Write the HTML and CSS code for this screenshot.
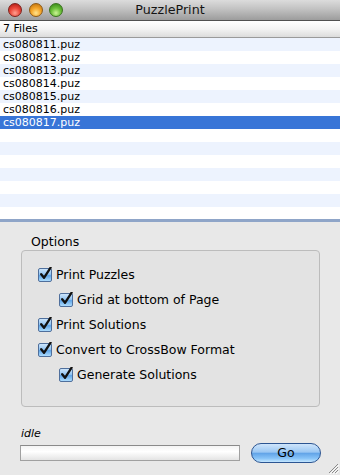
FILE: index.html
```html
<!DOCTYPE html>
<html>
<head>
<meta charset="utf-8">
<link rel="stylesheet" href="styles.css">
</head>
<body>
<div class="window">
  <div class="titlebar">
    <div class="lights">
      <span class="light red"></span>
      <span class="light yellow"></span>
      <span class="light green"></span>
    </div>
    <div class="title">PuzzlePrint</div>
  </div>
  <div class="list">
    <div class="list-header">7 Files</div>
    <div class="rows">
      <div class="row">cs080811.puz</div>
      <div class="row">cs080812.puz</div>
      <div class="row">cs080813.puz</div>
      <div class="row">cs080814.puz</div>
      <div class="row">cs080815.puz</div>
      <div class="row">cs080816.puz</div>
      <div class="row selected">cs080817.puz</div>
      <div class="row"></div>
      <div class="row"></div>
      <div class="row"></div>
      <div class="row"></div>
      <div class="row"></div>
      <div class="row"></div>
      <div class="row"></div>
    </div>
  </div>
  <div class="panel">
    <div class="group-label">Options</div>
    <div class="group">
      <label class="check"><span class="box"><svg viewBox="0 0 14 14" width="14" height="14"><path d="M3.2 7.2 L6 10.8 L12.6 0.6" fill="none" stroke="#111" stroke-width="2.3" stroke-linejoin="round" stroke-linecap="round"/></svg></span>Print Puzzles</label>
      <label class="check indent"><span class="box"><svg viewBox="0 0 14 14" width="14" height="14"><path d="M3.2 7.2 L6 10.8 L12.6 0.6" fill="none" stroke="#111" stroke-width="2.3" stroke-linejoin="round" stroke-linecap="round"/></svg></span>Grid at bottom of Page</label>
      <label class="check"><span class="box"><svg viewBox="0 0 14 14" width="14" height="14"><path d="M3.2 7.2 L6 10.8 L12.6 0.6" fill="none" stroke="#111" stroke-width="2.3" stroke-linejoin="round" stroke-linecap="round"/></svg></span>Print Solutions</label>
      <label class="check"><span class="box"><svg viewBox="0 0 14 14" width="14" height="14"><path d="M3.2 7.2 L6 10.8 L12.6 0.6" fill="none" stroke="#111" stroke-width="2.3" stroke-linejoin="round" stroke-linecap="round"/></svg></span>Convert to CrossBow Format</label>
      <label class="check indent"><span class="box"><svg viewBox="0 0 14 14" width="14" height="14"><path d="M3.2 7.2 L6 10.8 L12.6 0.6" fill="none" stroke="#111" stroke-width="2.3" stroke-linejoin="round" stroke-linecap="round"/></svg></span>Generate Solutions</label>
    </div>
    <div class="status">idle</div>
    <div class="bottom">
      <div class="progress"></div>
      <div class="go">Go</div>
    </div>
  </div>
  <svg class="grip" width="12" height="12" viewBox="0 0 12 12">
    <path d="M11 2 L2 11 M11 5 L5 11 M11 8 L8 11" stroke="#8a8a8a" stroke-width="1"/>
    <path d="M12 3 L3 12 M12 6 L6 12 M12 9 L9 12" stroke="#fafafa" stroke-width="1"/>
  </svg>
</div>
</body>
</html>
```

FILE: styles.css
```css
html, body {
  margin: 0;
  padding: 0;
}
body {
  width: 340px;
  height: 475px;
  overflow: hidden;
  background: #e8e8e8;
  font-family: "DejaVu Sans", "Liberation Sans", sans-serif;
  color: #000;
}
.window {
  position: relative;
  width: 340px;
  height: 475px;
}
.titlebar {
  position: relative;
  height: 20px;
  border-bottom: 1px solid #505050;
  background: linear-gradient(#dcdcdc, #c2c2c2 45%, #9c9c9c);
  display: flex;
  align-items: center;
  justify-content: center;
}
.lights {
  position: absolute;
  left: 8px;
  top: 3px;
  display: flex;
  gap: 6.5px;
}
.light {
  width: 14px;
  height: 14px;
  border-radius: 50%;
  box-sizing: border-box;
}
.red {
  background: radial-gradient(circle at 50% 75%, #ffa090 0%, #ec4a3c 45%, #a8140c 100%);
  border: 1px solid #7e221c;
}
.yellow {
  background: radial-gradient(circle at 50% 75%, #ffe48e 0%, #f5a62a 45%, #b86a06 100%);
  border: 1px solid #8e5a16;
}
.green {
  background: radial-gradient(circle at 50% 75%, #ccf396 0%, #6cc03a 45%, #2e7c10 100%);
  border: 1px solid #3a721e;
}
.title {
  font-size: 12.7px;
  line-height: 20px;
  color: #141414;
}
.list {
  background: #fff;
  border-bottom: 3px solid #8fa5c8;
}
.list-header {
  height: 16px;
  line-height: 16px;
  border-bottom: 1px solid #9a9a9a;
  background: linear-gradient(#ffffff, #f3f3f3 50%, #dcdcdc);
  font-size: 11px;
  padding-left: 3px;
}
.rows {
  height: 181px;
  overflow: hidden;
}
.row {
  height: 13px;
  line-height: 13px;
  font-size: 11px;
  padding-left: 3px;
  background: #fff;
}
.row:nth-child(odd) {
  background: #edf3fe;
}
.row.selected {
  background: #3875d7;
  color: #fff;
}
.panel {
  padding-top: 12px;
}
.group-label {
  height: 16px;
  line-height: 16px;
  font-size: 12.5px;
  padding-left: 31px;
}
.group {
  margin-left: 21px;
  width: 297px;
  height: 144px;
  box-sizing: content-box;
  border: 1px solid #bcbcbc;
  border-radius: 4px;
  background: #e3e3e3;
  padding: 11px 0 0 0;
  display: flex;
  flex-direction: column;
}
.check {
  height: 25px;
  display: flex;
  align-items: center;
  font-size: 12.5px;
  padding-left: 16px;
  gap: 4px;
}
.check.indent {
  padding-left: 37px;
}
.box {
  position: relative;
  width: 14px;
  height: 14px;
  box-sizing: border-box;
  border: 1px solid #4f6f9c;
  border-radius: 2px;
  background: linear-gradient(#cde5fb, #92c4f2 45%, #5fa5e8 55%, #addcfd);
}
.box svg {
  position: absolute;
  left: -1px;
  top: -2px;
}
.status {
  margin-top: 20px;
  padding-left: 21px;
  height: 14px;
  line-height: 14px;
  font-size: 11px;
  font-style: italic;
  margin-bottom: 2px;
}
.bottom {
  display: flex;
  align-items: center;
  height: 20px;
  padding-left: 20px;
  gap: 11px;
}
.progress {
  width: 220px;
  height: 16px;
  box-sizing: border-box;
  border: 1px solid #a0a0a0;
  border-top-color: #8a8a8a;
  background: linear-gradient(#f4f4f4, #ffffff 40%, #e4e4e4);
}
.go {
  width: 70px;
  height: 20px;
  box-sizing: border-box;
  border: 1px solid #2c5592;
  border-radius: 10px;
  background: linear-gradient(#cfe5fb, #9ac7f3 45%, #62a4e8 52%, #88c4f8 80%, #c4e6fe);
  font-size: 12.5px;
  line-height: 18px;
  text-align: center;
}
.grip {
  position: absolute;
  right: 1px;
  bottom: 1px;
}
```
